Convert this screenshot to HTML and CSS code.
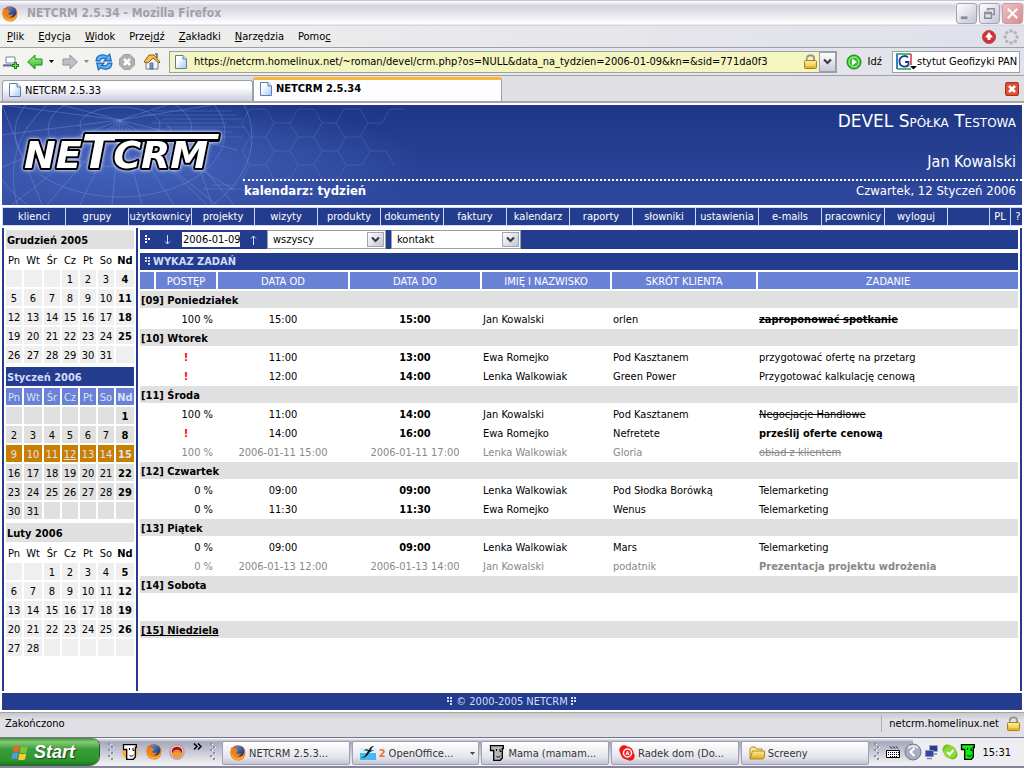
FILE: index.html
```html
<!DOCTYPE html>
<html lang="pl">
<head>
<meta charset="utf-8">
<title>NETCRM 2.5.34 - Mozilla Firefox</title>
<link rel="stylesheet" href="styles.css">
</head>
<body>
<svg class="defs" aria-hidden="true">
  <defs>
    <linearGradient id="blueglobe" x1="0" y1="0" x2="1" y2="1"><stop offset="0" stop-color="#6aa0e8"/><stop offset="1" stop-color="#10245e"/></linearGradient>
    <linearGradient id="greenfill" x1="0" y1="0" x2="0" y2="1"><stop offset="0" stop-color="#a4f48c"/><stop offset="1" stop-color="#2cb824"/></linearGradient>
    <linearGradient id="gold" x1="0" y1="0" x2="0" y2="1"><stop offset="0" stop-color="#fff0a0"/><stop offset="1" stop-color="#e0a810"/></linearGradient>
    <linearGradient id="sheet" x1="0" y1="0" x2="1" y2="1"><stop offset="0.3" stop-color="#fff"/><stop offset="1" stop-color="#a4c4f4"/></linearGradient>
  </defs>
  <symbol id="fox" viewBox="0 0 16 16">
    <circle cx="8" cy="7.5" r="7.3" fill="#c8500c"/>
    <circle cx="8.6" cy="6.3" r="5.6" fill="url(#blueglobe)"/>
    <path d="M1 2c1 1.300 2 1.200 3.500 1.200C6 3 6.500 4 6.300 5c1.300-.3 2 .2 2 .6-.6.7-1.700.8-2 1.800.4 2 3.500 2 4.700.6-.4 2.300-2 3-3.600 3 3.500 1.500 7-.8 7-4.500 0-1-.3-2-.7-2.800C16.300 7 16 15.500 8 15.500 2 15.500-.5 10 .7 5.500z" fill="#f08018"/>
    <path d="M1.500 7c.5 4 3.500 6.500 7 6.300 3 0 5-2 5.800-4-.3 3.700-3 5.500-6.300 5.500-4 0-6.700-3.400-6.500-7.800z" fill="#fcb62c"/>
  </symbol>
  <symbol id="page" viewBox="0 0 12 14"><path d="M.5.5h7.500l3.500 3.500v9.500H.5z" fill="url(#sheet)" stroke="#5c7cb8"/><path d="M8 .5v3.500h3.500" fill="#dce8fc" stroke="#5c7cb8"/></symbol>
  <symbol id="lock" viewBox="0 0 13 15"><path d="M3 8V4.500C3 .5 10 .5 10 4.500V8" fill="none" stroke="#909090" stroke-width="2"/><path d="M3.500 7V4.500C4 2 9 2 9.500 4.500" fill="none" stroke="#e0e0e0" stroke-width=".7"/><rect x=".5" y="6.500" width="12" height="8" rx="1" fill="url(#gold)" stroke="#a88418"/><path d="M2 9h9M2 11h9" stroke="#fff4b0" stroke-width=".6"/></symbol>
  <symbol id="face" viewBox="0 0 16 16"><path d="M1.500.7h12.800v2.800h-1v9.500l-2 2.300H4.700V5.500H1.500z" fill="currentColor" stroke="#000" stroke-width="1.300"/><path d="M7.500 4v2M11 4v2.500h1.500M7.500 11.500c1.500 1 3 .8 4-.5" fill="none" stroke="#000"/></symbol>
  <symbol id="chev" viewBox="0 0 9 7"><path d="M1 1.500l3.500 3.500L8 1.500" fill="none" stroke="#3c3c44" stroke-width="2.200"/></symbol>
  <symbol id="dots" viewBox="0 0 6 9"><path d="M0 0h2v2H0zM3 0h2v2H3zM0 3h2v2H0zM3 3h2v2H3zM3 6h2v2H3z" fill="currentColor"/></symbol>
  <symbol id="grip" viewBox="0 0 6 20"><path d="M0 1h2v2H0zM3 4h2v2H3zM0 7h2v2H0zM3 10h2v2H3zM0 13h2v2H0zM3 16h2v2H3z" fill="#8890a4"/><path d="M2 2h1v1H2zM5 5h1v1H5zM2 8h1v1H2zM5 11h1v1H5zM2 14h1v1H2zM5 17h1v1H5z" fill="#fff"/></symbol>
</svg>

<header class="titlebar">
  <svg class="i16"><use href="#fox"/></svg>
  <span class="wtitle">NETCRM 2.5.34 - Mozilla Firefox</span>
  <button class="wbtn" aria-label="Minimalizuj"><svg viewBox="0 0 20 20"><path d="M4 14.500h7" stroke="#8c8c9c" stroke-width="3"/></svg></button>
  <button class="wbtn" aria-label="Przywróć"><svg viewBox="0 0 20 20"><path d="M8 7V5h7v6h-2" fill="none" stroke="#8c8c9c" stroke-width="1.500"/><path d="M5 9h7v6H5zM5 10h7" fill="none" stroke="#8c8c9c" stroke-width="1.500"/></svg></button>
  <button class="wbtn wclose" aria-label="Zamknij"><svg viewBox="0 0 20 20"><path d="M5 5l10 10M15 5L5 15" stroke="#fff" stroke-width="2.200"/></svg></button>
</header>

<nav class="menubar">
  <a href="#"><u>P</u>lik</a><a href="#"><u>E</u>dycja</a><a href="#"><u>W</u>idok</a><a href="#">Przej<u>d</u>ź</a><a href="#"><u>Z</u>akładki</a><a href="#"><u>N</u>arzędzia</a><a href="#">Pomo<u>c</u></a>
  <span class="grow"></span>
  <svg class="i16" viewBox="0 0 16 16"><circle cx="8" cy="8" r="6.500" fill="#d83030" stroke="#a85050"/><path d="M8 3l4 5.500H9.500v2.500h-3V8.500H4z" fill="#fff"/></svg>
  <svg class="i16" viewBox="0 0 16 16"><g fill="#b4b4b8"><circle cx="8" cy="2" r="1.800"/><circle cx="12.200" cy="3.800" r="1.800"/><circle cx="14" cy="8" r="1.800"/><circle cx="12.200" cy="12.200" r="1.800"/><circle cx="8" cy="14" r="1.800"/><circle cx="3.800" cy="12.200" r="1.800"/><circle cx="2" cy="8" r="1.800"/><circle cx="3.800" cy="3.800" r="1.800"/></g></svg>
</nav>

<div class="toolbar">
  <svg class="i16" viewBox="0 0 16 16"><path d="M3 3h9v6H3zM1 11h10" fill="#fff" stroke="#7888a0"/><path d="M0 11.500h11" stroke="#607090" stroke-width="2"/><path d="M12.500 8v7M9 11.500h7" stroke="#168418" stroke-width="3"/><path d="M12.500 9v5M10 11.500h5" stroke="#70e060"/></svg>
  <svg class="i16 back" viewBox="0 0 16 16"><path d="M.7 8L8 1v4h7v6H8v4z" fill="url(#greenfill)" stroke="#1c8c1c"/></svg>
  <svg class="tri" viewBox="0 0 5 3"><path d="M0 0h5L2.500 3z" fill="#000"/></svg>
  <svg class="i16 fwd" viewBox="0 0 16 16"><path d="M15.300 8L8 1v4H1v6h7v4z" fill="#c0c0c4" stroke="#949498"/></svg>
  <svg class="tri" viewBox="0 0 5 3"><path d="M0 0h5L2.500 3z" fill="#888"/></svg>
  <svg class="i18" viewBox="0 0 16 16"><path d="M1 7C1 2 7 0 11 3l2-2 1.500 6H8l2-2C7 4 5 5 4.500 7z" fill="#5cb4f4" stroke="#1860b8"/><path d="M15 9c0 5-6 7-10 4l-2 2L1.500 9H8l-2 2c3 1 5 0 5.500-2z" fill="#5cb4f4" stroke="#1860b8"/></svg>
  <svg class="i16 stop" viewBox="0 0 16 16"><path d="M5 .5h6L15.500 5v6L11 15.500H5L.5 11V5z" fill="#b0b0b0" stroke="#a0a0a0"/><path d="M5 5l6 6M11 5l-6 6" stroke="#fff" stroke-width="2.500"/></svg>
  <svg class="i18 home" viewBox="0 0 18 18"><path d="M3 8v8h12V8L9 3z" fill="#f4f4f8" stroke="#707888"/><path d="M7 10h3v6H7z" fill="#7898c8" stroke="#405880" stroke-width=".7"/><path d="M1 9l5-7h5l6 7-1 1-6-5-5 5z" fill="#f8c03c" stroke="#806020"/><path d="M12 1h2v4" fill="none" stroke="#806050" stroke-width="1.500"/></svg>
  <div class="urlbox">
    <svg class="pageicon"><use href="#page"/></svg>
    <input class="url" aria-label="Adres" value="https://netcrm.homelinux.net/~roman/devel/crm.php?os=NULL&amp;data_na_tydzien=2006-01-09&amp;kn=&amp;sid=771da0f3">
    <svg class="lockicon"><use href="#lock"/></svg>
    <button class="drop" aria-label="Historia adresów"><svg class="chev"><use href="#chev"/></svg></button>
  </div>
  <button class="go"><svg class="i16" viewBox="0 0 16 16"><circle cx="8" cy="8" r="7" fill="#38c030" stroke="#168018"/><circle cx="8" cy="8" r="5" fill="none" stroke="#b8f4a8"/><path d="M6 4.500L11 8l-5 3.500z" fill="#fff"/></svg>Idź</button>
  <div class="searchbox">
    <svg class="google" viewBox="0 0 21 17"><path d="M1 16V1h14" fill="none" stroke="#20a040" stroke-width="1.500"/><path d="M1 1v15" stroke="#3070d0" stroke-width="1.500"/><path d="M1 16h14" stroke="#20a040" stroke-width="1.500"/><path d="M15 1v11" stroke="#d83030" stroke-width="1.500"/><path d="M12 4.500C10 2 3.500 2.500 3.500 8.500S10 14.500 12.500 12V9H9" fill="none" stroke="#1c3ca4" stroke-width="1.800"/><path d="M14 13h7l-3.500 3.500z" fill="#000"/></svg>
    <input class="search" aria-label="Szukaj" value="stytut Geofizyki PAN">
  </div>
</div>

<div class="tabs">
  <button class="tab"><svg class="pageicon"><use href="#page"/></svg>NETCRM 2.5.33</button>
  <button class="tab active"><svg class="pageicon"><use href="#page"/></svg>NETCRM 2.5.34</button>
  <span class="grow"></span>
  <button class="tabclose" aria-label="Zamknij kartę"><svg viewBox="0 0 14 14"><rect x=".5" y=".5" width="13" height="13" rx="1.500" fill="#e44c30" stroke="#a83020"/><path d="M4 4l6 6M10 4l-6 6" stroke="#fff" stroke-width="2.500"/></svg></button>
</div>

<div class="page">
  <header class="banner">
    <svg class="art" viewBox="0 0 420 100" aria-hidden="true">
      <defs>
        <radialGradient id="glow" cx=".3" cy=".6" r=".7"><stop offset="0" stop-color="#4564bc"/><stop offset="1" stop-color="#4564bc" stop-opacity="0"/></radialGradient>
      </defs>
      <rect width="420" height="100" fill="url(#glow)"/>
      <g fill="none" stroke="#7e98e4" stroke-opacity=".4">
        <ellipse cx="118" cy="20" rx="40" ry="18"/><ellipse cx="118" cy="24" rx="72" ry="38"/><ellipse cx="118" cy="28" rx="105" ry="64"/><ellipse cx="118" cy="32" rx="132" ry="95"/>
        <path d="M118 15L0 0M118 15L0 30M118 15L0 62M118 15L10 100M118 15L45 100M118 15L78 100M118 15L110 100M118 15L140 100M118 15L172 100M118 15L205 100M118 15L232 85M118 15L235 45M118 15L60 0M118 15L165 0M118 15L210 0"/>
        <path d="M0 0L40 100M45 0Q0 40 15 100M140 40L215 100M165 20L232 100M190 40L210 100"/>
      </g>
      <g stroke="#8aa2ea" stroke-opacity=".25"><path d="M150 6h80M140 10h95M160 14h80M150 18h75M165 22h78M165 27h65M170 32h70M210 80h25M200 84h40"/></g>
      <g fill="none" stroke="#7c96e0" stroke-opacity=".25">
        <path d="M240 18l8-14h16l8 14-8 14h-16zM272 18h16l8-14h16l8 14-8 14h-16l-8-14M320 18h14l8-14h16l8 14-8 14h-16l-8-14M366 18h14l8-14h14M248 32l-8 14 8 14h16l8-14-8-14M272 46h16l8 14-8 14h-16l-8-14M288 46l8-14M312 32l8 14-8 14h-16M320 46h16l8-14M336 46l8 14h16l8-14-8-14M368 46h16l8 14M248 60l-8 14 8 14h16l8-14M312 60l8 14h16l8-14"/>
      </g>
    </svg>
    <svg class="logo" viewBox="0 0 208 48" role="img" aria-label="NETCRM">
      <path class="inkbar" d="M76 7h125l-1 6H75z"/>
      <text x="6" y="41">NE<tspan class="big">T</tspan>CRM</text>
      <path class="fillbar" d="M76 7h125l-1 5H75z"/>
    </svg>
    <div class="headinfo">
      <div class="company">DEVEL Spółka Testowa</div>
      <div class="user">Jan Kowalski</div>
      <div class="headline"><strong>kalendarz: tydzień</strong><span>Czwartek, 12 Styczeń 2006</span></div>
    </div>
  </header>

  <nav class="mainnav">
    <a href="#">klienci</a><a href="#">grupy</a><a href="#">użytkownicy</a><a href="#">projekty</a><a href="#">wizyty</a><a href="#">produkty</a><a href="#">dokumenty</a><a href="#">faktury</a><a href="#">kalendarz</a><a href="#">raporty</a><a href="#">słowniki</a><a href="#">ustawienia</a><a href="#">e-mails</a><a href="#">pracownicy</a><a href="#" class="last">wyloguj</a>
    <span class="grow"></span>
    <a href="#" class="lang">PL</a><a href="#" class="help">?</a>
  </nav>

  <div class="main">
    <aside class="side">
      <table class="cal">
        <tr><th colspan="7" class="month">Grudzień 2005</th></tr>
        <tr class="wd"><th>Pn</th><th>Wt</th><th>Śr</th><th>Cz</th><th>Pt</th><th>So</th><th>Nd</th></tr>
        <tr><td></td><td></td><td></td><td>1</td><td>2</td><td>3</td><td>4</td></tr>
        <tr><td>5</td><td>6</td><td>7</td><td>8</td><td>9</td><td>10</td><td>11</td></tr>
        <tr><td>12</td><td>13</td><td>14</td><td>15</td><td>16</td><td>17</td><td>18</td></tr>
        <tr><td>19</td><td>20</td><td>21</td><td>22</td><td>23</td><td>24</td><td>25</td></tr>
        <tr><td>26</td><td>27</td><td>28</td><td>29</td><td>30</td><td>31</td><td></td></tr>
      </table>
      <table class="cal current">
        <tr><th colspan="7" class="month">Styczeń 2006</th></tr>
        <tr class="wd"><th>Pn</th><th>Wt</th><th>Śr</th><th>Cz</th><th>Pt</th><th>So</th><th>Nd</th></tr>
        <tr><td></td><td></td><td></td><td></td><td></td><td></td><td>1</td></tr>
        <tr><td>2</td><td>3</td><td>4</td><td>5</td><td>6</td><td>7</td><td>8</td></tr>
        <tr class="week"><td>9</td><td>10</td><td>11</td><td><u>12</u></td><td>13</td><td>14</td><td>15</td></tr>
        <tr><td>16</td><td>17</td><td>18</td><td>19</td><td>20</td><td>21</td><td>22</td></tr>
        <tr><td>23</td><td>24</td><td>25</td><td>26</td><td>27</td><td>28</td><td>29</td></tr>
        <tr><td>30</td><td>31</td><td></td><td></td><td></td><td></td><td></td></tr>
      </table>
      <table class="cal">
        <tr><th colspan="7" class="month">Luty 2006</th></tr>
        <tr class="wd"><th>Pn</th><th>Wt</th><th>Śr</th><th>Cz</th><th>Pt</th><th>So</th><th>Nd</th></tr>
        <tr><td></td><td></td><td>1</td><td>2</td><td>3</td><td>4</td><td>5</td></tr>
        <tr><td>6</td><td>7</td><td>8</td><td>9</td><td>10</td><td>11</td><td>12</td></tr>
        <tr><td>13</td><td>14</td><td>15</td><td>16</td><td>17</td><td>18</td><td>19</td></tr>
        <tr><td>20</td><td>21</td><td>22</td><td>23</td><td>24</td><td>25</td><td>26</td></tr>
        <tr><td>27</td><td>28</td><td></td><td></td><td></td><td></td><td></td></tr>
      </table>
    </aside>

    <main class="content">
      <form class="filter">
        <svg class="mark" viewBox="0 0 6 9"><path d="M0 0h2v2H0zM0 3h2v2H0zM3 3h2v2H3zM0 6h2v2H0z" fill="#fff"/></svg>
        <button type="button" class="arrow" aria-label="Następny tydzień"><svg viewBox="0 0 7 10"><path d="M3.500 0v9M1 6.500L3.500 9 6 6.500" fill="none" stroke="#d4dcfc"/></svg></button>
        <input class="date" aria-label="Data" value="2006-01-09">
        <button type="button" class="arrow" aria-label="Poprzedni tydzień"><svg viewBox="0 0 7 10"><path d="M3.500 10V1M1 3.500L3.500 1 6 3.500" fill="none" stroke="#d4dcfc"/></svg></button>
        <span class="pick person"><select aria-label="Osoba"><option>wszyscy</option></select><i><svg class="chev"><use href="#chev"/></svg></i></span>
        <span class="pick kind"><select aria-label="Rodzaj"><option>kontakt</option></select><i><svg class="chev"><use href="#chev"/></svg></i></span>
      </form>
      <h1 class="listtitle"><svg class="dots"><use href="#dots"/></svg>WYKAZ ZADAŃ</h1>
      <table class="tasks">
        <colgroup><col class="c1"><col class="c2"><col class="c3"><col class="c3"><col class="c5"><col class="c6"><col></colgroup>
        <tr class="head"><th></th><th>POSTĘP</th><th>DATA OD</th><th>DATA DO</th><th>IMIĘ I NAZWISKO</th><th>SKRÓT KLIENTA</th><th>ZADANIE</th></tr>
        <tr class="day"><th colspan="7">[09] Poniedziałek</th></tr>
        <tr><td></td><td>100 %</td><td>15:00</td><td><b>15:00</b></td><td>Jan Kowalski</td><td>orlen</td><td><s><b>zaproponować spotkanie</b></s></td></tr>
        <tr class="day"><th colspan="7">[10] Wtorek</th></tr>
        <tr><td></td><td class="alert">!</td><td>11:00</td><td><b>13:00</b></td><td>Ewa Romejko</td><td>Pod Kasztanem</td><td>przygotować ofertę na przetarg</td></tr>
        <tr><td></td><td class="alert">!</td><td>12:00</td><td><b>14:00</b></td><td>Lenka Walkowiak</td><td>Green Power</td><td>Przygotować kalkulację cenową</td></tr>
        <tr class="day"><th colspan="7">[11] Środa</th></tr>
        <tr><td></td><td>100 %</td><td>11:00</td><td><b>14:00</b></td><td>Jan Kowalski</td><td>Pod Kasztanem</td><td><s>Negocjacje Handlowe</s></td></tr>
        <tr><td></td><td class="alert">!</td><td>14:00</td><td><b>16:00</b></td><td>Ewa Romejko</td><td>Nefretete</td><td><b>prześlij oferte cenową</b></td></tr>
        <tr class="dim"><td></td><td>100 %</td><td>2006-01-11 15:00</td><td>2006-01-11 17:00</td><td>Lenka Walkowiak</td><td>Gloria</td><td><s>obiad z klientem</s></td></tr>
        <tr class="day"><th colspan="7">[12] Czwartek</th></tr>
        <tr><td></td><td>0 %</td><td>09:00</td><td><b>09:00</b></td><td>Lenka Walkowiak</td><td>Pod Słodka Borówką</td><td>Telemarketing</td></tr>
        <tr><td></td><td>0 %</td><td>11:30</td><td><b>11:30</b></td><td>Ewa Romejko</td><td>Wenus</td><td>Telemarketing</td></tr>
        <tr class="day"><th colspan="7">[13] Piątek</th></tr>
        <tr><td></td><td>0 %</td><td>09:00</td><td><b>09:00</b></td><td>Lenka Walkowiak</td><td>Mars</td><td>Telemarketing</td></tr>
        <tr class="dim"><td></td><td>0 %</td><td>2006-01-13 12:00</td><td>2006-01-13 14:00</td><td>Jan Kowalski</td><td>podatnik</td><td><b>Prezentacja projektu wdrożenia</b></td></tr>
        <tr class="day"><th colspan="7">[14] Sobota</th></tr>
        <tr class="blank"><td colspan="7"></td></tr>
        <tr class="day"><th colspan="7"><u>[15] Niedziela</u></th></tr>
      </table>
    </main>
  </div>

  <footer class="foot"><svg class="dots"><use href="#dots"/></svg>© 2000-2005 NETCRM<svg class="dots" viewBox="0 0 6 9"><path d="M0 0h2v2H0zM3 0h2v2H3zM0 3h2v2H0zM3 3h2v2H3zM0 6h2v2H0z" fill="currentColor"/></svg></footer>
</div>

<div class="status">
  <span>Zakończono</span>
  <span class="host">netcrm.homelinux.net<svg class="lockicon"><use href="#lock"/></svg></span>
</div>

<div class="taskbar">
  <button class="start"><svg class="flag" viewBox="0 0 18 17"><path d="M3 2.500C5 1 7 1.200 8.700 2L7.500 8C6 7.200 4 7.200 1.800 8.300z" fill="#f06428"/><path d="M9.800 2.500c2 1 4.200 1 6.900-.2L15.500 8.300c-2.500 1.200-4.700 1.200-6.900.2z" fill="#7cc43c"/><path d="M1.600 9.300c2-1.200 4-1.100 5.700-.3L6.100 15c-1.700-.8-3.700-.8-5.700.4z" fill="#5c94ec"/><path d="M8.400 9.500c2 1 4.200 1 6.900-.2l-1.200 6c-2.500 1.200-4.700 1.200-6.900.2z" fill="#fccc30"/></svg>Start</button>
  <div class="quick">
    <svg class="grip"><use href="#grip"/></svg>
    <svg class="i16 face" viewBox="0 0 16 16"><circle cx="8" cy="8" r="7.700" fill="#f8b028"/><use href="#face" width="16" height="16"/></svg>
    <svg class="i16"><use href="#fox"/></svg>
    <svg class="i16" viewBox="0 0 16 16"><circle cx="8" cy="8" r="7" fill="#fff" stroke="#d09090" stroke-width="1.500"/><circle cx="8" cy="8" r="5.500" fill="#9c1420"/><path d="M3 9.500C4 5 11 4 13 9.500c-1 5-9 5-10 0z" fill="#e8a030"/><path d="M3 9l3-3 3 2 2-1 2 2-5-1z" fill="#fc6c50"/></svg>
    <svg class="more" viewBox="0 0 9 7"><path d="M1 .5l3 3-3 3M5 .5l3 3-3 3" fill="none" stroke="#000" stroke-width="1.500"/></svg>
    <svg class="grip"><use href="#grip"/></svg>
  </div>
  <div class="apps">
    <button class="app"><svg class="i16"><use href="#fox"/></svg><span>NETCRM 2.5.3...</span></button>
    <button class="app"><svg class="i16" viewBox="0 0 16 16"><path d="M0 3h16v5H0z" fill="#d0f0fc"/><path d="M0 8h16v7H0z" fill="#48b8f0"/><path d="M1 13c4-1 5-4 7-7-2-.6-3-.5-4.500 0C5 4 7 4 9 5c1-3 3-4.500 5.500-4-2.500 1-3 2.500-3.700 4.500 1.200-.5 2.200-.3 3.200.5-2 0-3.500.3-4.500 1.500C7.500 11 5 13 1 13z" fill="#101820"/></svg><b class="count">2</b><span>OpenOffice...</span><svg class="tri" viewBox="0 0 5 3"><path d="M0 0h5L2.500 3z" fill="#444"/></svg></button>
    <button class="app"><svg class="i16 face gface"><use href="#face"/></svg><span>Mama (mamam...</span></button>
    <button class="app"><svg class="i16" viewBox="0 0 16 16"><circle cx="5" cy="5" r="4.700" fill="#f01818"/><circle cx="11" cy="11" r="4.700" fill="#f01818"/><circle cx="8" cy="8" r="6.500" fill="#f01818"/><circle cx="8.500" cy="8" r="4" fill="none" stroke="#fff" stroke-width="1.500"/><path d="M7 10l1.500-4L10 10M7.500 9h2" fill="none" stroke="#fff"/></svg><span>Radek dom (Do...</span></button>
    <button class="app"><svg class="i16" viewBox="0 0 16 16"><path d="M1 13V3.500L2.500 2H6l1.500 2H13v2" fill="#fce890" stroke="#b08820"/><path d="M1 14L3.500 6H15.500v6l-1.500 2z" fill="url(#gold)" stroke="#b08820"/></svg><span>Screeny</span></button>
  </div>
  <div class="kbd">
    <svg class="grip"><use href="#grip"/></svg>
    <svg class="keys" viewBox="0 0 14 14"><path d="M.5 5.500h13v7H.5z" fill="#fff" stroke="#000"/><path d="M2 7.500h11M2 9.500h11M4 11.500h7" stroke="#000" stroke-dasharray="1 1"/><path d="M4 1.500l2 2M7 1.500l2 2M10 1.500l2 2" stroke="#000"/></svg>
  </div>
  <div class="tray">
    <button class="expand" aria-label="Pokaż ukryte ikony"><svg viewBox="0 0 18 18"><circle cx="9" cy="9" r="8" fill="#a8acc0" stroke="#74788c"/><path d="M4 5a7 7 0 0 1 10 0" fill="none" stroke="#e0e4ec" stroke-width="2"/><path d="M10.500 5L6.500 9l4 4" fill="none" stroke="#fff" stroke-width="2"/></svg></button>
    <svg class="i16" viewBox="0 0 16 16"><path d="M5.500 1.500h8v6h-8z" fill="#2c3c8c" stroke="#98a4c0"/><path d="M1.500 6.500h8v6h-8z" fill="#3048a8" stroke="#8894b4"/><path d="M3 14.500h5M10 10h3" stroke="#8090a8" stroke-width="1.500"/></svg>
    <svg class="i16" viewBox="0 0 16 16"><circle cx="5.500" cy="5.500" r="5" fill="#70c020"/><circle cx="10.500" cy="10.500" r="5" fill="#70c020"/><circle cx="8" cy="8" r="6.500" fill="#8cd834"/><path d="M5 8l2.500 2.500L11.500 6" fill="none" stroke="#fff" stroke-width="2"/></svg>
    <svg class="i16 face lface"><use href="#face"/></svg>
    <time>15:31</time>
  </div>
</div>
</body>
</html>
```
FILE: styles.css
```css
* { box-sizing: border-box; }
body {
  margin: 0;
  min-height: 100vh;
  display: flex;
  flex-direction: column;
  background: #fff;
  color: #000;
  font-family: "DejaVu Sans Condensed", "Noto Sans", sans-serif;
  font-size: 11px;
  line-height: 17px;
}
button, input, select { font: inherit; color: inherit; margin: 0; padding: 0; border: 0; background: none; min-width: 0; }
a { color: inherit; text-decoration: none; }
svg { display: block; flex: none; }
.defs { position: absolute; width: 0; height: 0; }
.grow { flex: 1; }
.i16 { width: 16px; height: 16px; }
.i18 { width: 18px; height: 18px; }
.tri { width: 5px; height: 3px; }
.chev { width: 9px; height: 7px; }
.pageicon { width: 12px; height: 14px; }
.lockicon { width: 13px; height: 15px; }
.grip { width: 6px; height: 20px; }
.dots { width: 6px; height: 9px; }

/* Browser window */
.titlebar {
  display: flex; align-items: center; gap: 2px;
  height: 26px; padding: 0 1px 0 2px;
  border-top: 1px solid #c4c4d4;
  background: linear-gradient(#fff 0, #d4d4e0 20%, #e4e4ec 50%, #fff 90%, #c8c8dc);
}
.wtitle { flex: 1; padding-left: 7px; color: #a0a0a4; font-size: 12px; font-weight: bold; }
.wbtn { width: 21px; height: 21px; border: 1px solid #a4a4b8; border-radius: 3px; background: linear-gradient(135deg, #fff, #c4c4d4); }
.wclose { background: linear-gradient(135deg, #ecc0c0, #d88c90); border-color: #c89ca4; }
.menubar {
  display: flex; align-items: center; gap: 14px;
  height: 22px; padding: 0 5px 0 7px;
  border-bottom: 1px solid #a0a0a4;
  background: linear-gradient(90deg, #f0f0ec, #dfe0ea);
}
.menubar .i16 + .i16 { margin-left: -8px; }
.toolbar {
  display: flex; align-items: center; gap: 6px;
  height: 28px; padding: 0 4px 0 3px;
  border-bottom: 1px solid #a0a0a4;
  background: linear-gradient(90deg, #f4f4f0, #e0e1ea);
}
.toolbar .back, .toolbar .home, .toolbar .fwd { margin-left: 2px; }
.urlbox { flex: 1; display: flex; align-items: center; height: 22px; margin-left: 2px; padding-left: 5px; border: 1px solid #98a0a8; background: #f5f5bf; }
.url { flex: 1; height: 18px; padding-left: 7px; }
.drop { display: grid; place-items: center; width: 17px; height: 20px; margin-left: 2px; border: 1px solid #98a0b0; background: linear-gradient(#fff, #c8c8d8); }
.go { display: flex; align-items: center; gap: 6px; padding: 0 4px 0 3px; }
.searchbox { display: flex; align-items: center; width: 128px; height: 22px; padding-left: 3px; border: 1px solid #98a0a8; background: #fff; }
.google { width: 21px; height: 17px; }
.search { flex: 1; height: 18px; }
.tabs { display: flex; align-items: flex-end; height: 25px; padding: 0 5px 0 2px; background: #dfdfe4; }
.tab {
  display: flex; align-items: center; gap: 4px;
  width: 251px; height: 21px; padding: 0 6px 2px;
  border: 1px solid #98a0a8; border-bottom: 0; border-radius: 3px 3px 0 0;
  background: linear-gradient(#fff 30%, #ccccde);
}
.tab.active { width: 249px; height: 24px; padding-bottom: 4px; border-top: 3px solid #fcb834; background: #fdfdff; font-weight: bold; }
.tabclose { align-self: center; width: 14px; height: 14px; }

/* Page header */
.page { flex: 1; display: flex; flex-direction: column; gap: 2px; padding: 2px; border-top: 2px solid #a4a4a8; }
.banner { position: relative; display: flex; justify-content: space-between; height: 100px; background: linear-gradient(#1e3685, #2e479c 90%); overflow: hidden; }
.art { position: absolute; left: 0; top: 0; width: 420px; height: 100px; }
.logo { position: relative; width: 208px; height: 48px; margin: 22px 0 0 16px; overflow: visible; filter: drop-shadow(0 0 1px #dfe6ff) drop-shadow(0 0 2px #a8baf4); }
.logo text { font-family: "DejaVu Sans", sans-serif; font-weight: bold; font-style: oblique; font-size: 38px; fill: #fff; stroke: #000; stroke-width: 4px; stroke-linejoin: round; paint-order: stroke; }
.logo .big { font-size: 46px; }
.inkbar { fill: #000; stroke: #000; stroke-width: 4px; stroke-linejoin: round; }
.fillbar { fill: #fff; }
.headinfo { position: relative; flex: 1; margin-left: 17px; color: #fff; text-align: right; }
.company { padding: 6px 6px 0 0; font-family: "DejaVu Sans", sans-serif; font-size: 17px; line-height: 20px; font-variant: small-caps; }
.user { padding: 21px 6px 0 0; font-size: 16px; line-height: 20px; }
.headline { display: flex; justify-content: space-between; margin-top: 7px; padding: 0 6px 0 1px; border-top: 2px dotted #fff; font-size: 13px; line-height: 20px; }
.mainnav { display: flex; height: 19px; background: #233c8d; border: 1px solid #ccd8ff; border-right: 0; color: #fff; text-align: center; }
.mainnav a { flex: 0 1 63px; border-right: 1px solid #ccd8ff; white-space: nowrap; display: flex; justify-content: center; line-height: 18px; }
.mainnav .lang { flex-basis: 22px; border-left: 1px solid #ccd8ff; }
.mainnav .help { flex-basis: 11px; border-right: 0; padding-left: 3px; }

/* Calendars */
.main { flex: 1; display: flex; border: solid #233c8d; border-width: 0 2px; }
.side { width: 134px; border-right: 2px solid #233c8d; }
table { border-spacing: 2px; border-collapse: separate; table-layout: fixed; width: 100%; }
th, td { padding: 2px 0 0; height: 17px; line-height: 15px; font-weight: normal; overflow: hidden; white-space: nowrap; }
.cal { table-layout: auto; text-align: center; }
.cal td, .cal th { width: 16px; background: #efefef; }
.cal tr > :nth-child(2), .cal tr > :nth-child(7) { width: 18px; }
.cal .wd th { background: #fff; }
.cal tr > :nth-child(7) { font-weight: bold; }
.cal .month { height: 19px; padding-left: 1px; background: #e0e0e0; text-align: left; font-weight: bold; }
.current td { background: #e0e0e0; }
.current .month { background: #233c8d; color: #d4dcfc; }
.current .wd th { background: #6a82d5; color: #d8e0ff; }
.current .week td { background: #c87f00; color: #e0e0f4; }

/* Task list */
.content { flex: 1; min-width: 0; padding-top: 2px; }
.filter { display: flex; align-items: center; height: 19px; margin: 0 2px 4px; padding-left: 5px; background: #233c8d; }
.mark { width: 6px; height: 9px; }
.arrow { width: 7px; height: 10px; margin: 0 11px 0 13px; display: flex; }
.arrow svg { width: 7px; height: 10px; }
.date { width: 58px; height: 15px; padding-left: 1px; background: #fff; }
.date + .arrow { margin-left: 10px; margin-right: 10px; }
.pick { position: relative; height: 19px; margin-right: 5px; }
.person { width: 119px; }
.kind { width: 130px; }
.pick select { appearance: none; width: 100%; height: 19px; padding-left: 5px; border: 1px solid #98a0b0; background: #fff; display: block; }
.pick i { position: absolute; right: 2px; top: 2px; width: 17px; height: 15px; display: grid; place-items: center; border: 1px solid #a0a4b4; background: linear-gradient(135deg, #fff, #c4c4d4); pointer-events: none; }
.listtitle { display: flex; align-items: center; gap: 2px; margin: 0 2px; padding-left: 5px; height: 17px; background: #233c8d; color: #d4dcfc; font-size: 11px; }
.c1 { width: 14px; }
.c2 { width: 60px; }
.c3 { width: 130px; }
.c5 { width: 128px; }
.c6 { width: 144px; }
.tasks .head th { background: #6a82d5; color: #fff; text-align: center; }
.tasks .day th { background: #e0e0e0; text-align: left; font-weight: bold; padding-left: 1px; }
.tasks td { padding-left: 1px; }
.tasks td:nth-child(2) { text-align: right; padding-right: 3px; }
.tasks td:nth-child(3), .tasks td:nth-child(4), .tasks .alert:nth-child(2) { text-align: center; padding-left: 0; padding-right: 0; }
.alert { color: #f00; font-weight: bold; }
.dim { color: #888; }
.tasks .blank td { height: 24px; }
.foot { display: flex; align-items: center; justify-content: center; gap: 3px; height: 17px; background: #233c8d; color: #d4dcfc; }

/* Status and desktop bars */
.status { display: flex; align-items: center; justify-content: space-between; height: 25px; padding: 0 4px 4px 5px; border-top: 1px solid #a4a4a8; background: linear-gradient(#c8c8cc, #e0e0e6 30%, #dfdfe4); }
.host { display: flex; align-items: center; gap: 8px; padding-left: 7px; border-left: 1px solid #b0b0b4; }
.taskbar { display: flex; height: 31px; border-top: 1px solid #74748c; border-bottom: 2px solid #84849c; background: linear-gradient(#fff 0, #a8a8bc 14%, #c8c8d8 50%, #eee 90%); color: #333; }
.start {
  display: flex; align-items: center; gap: 5px;
  width: 99px; padding: 0 0 0 11px;
  border-radius: 0 8px 10px 0;
  background: linear-gradient(#3c8c34 0, #84cc74 14%, #3c9c3c 40%, #2c942c 80%, #207020);
  box-shadow: 1px 0 0 #186018;
  color: #fff; font: italic bold 18px/22px "Liberation Sans", sans-serif; text-shadow: 1px 1px 1px #144c14;
}
.flag { width: 18px; height: 17px; }
.quick { display: flex; align-items: center; justify-content: space-between; width: 123px; padding: 0 6px 0 9px; }
.more { width: 9px; height: 7px; margin-bottom: 12px; }
.face { color: #fff; }
.gface { color: #b8b8b8; }
.lface { color: #10f010; }
.apps { flex: 1; display: flex; gap: 2px; padding: 3px 0 1px; min-width: 0; }
.app { flex: 1 1 0; display: flex; align-items: center; gap: 3px; padding: 0 7px; border: 1px solid #a0a0b4; border-radius: 2px; background: linear-gradient(#fff, #e4e4ec 70%, #c4c4d4); white-space: nowrap; }
.app span { flex: 1; text-align: left; overflow: hidden; }
.app .tri { margin-right: -4px; }
.count { color: #f06c40; }
.keys { width: 14px; height: 14px; }
.kbd { display: flex; align-items: center; gap: 6px; padding: 0 0 0 6px; width: 36px; }
.tray { display: flex; align-items: center; gap: 2px; padding-right: 13px; background: linear-gradient(90deg, transparent 9px, #eeeef2 9px); color: #000; }
.expand, .expand svg { width: 18px; height: 18px; }
.tray time { padding-left: 4px; }
```
